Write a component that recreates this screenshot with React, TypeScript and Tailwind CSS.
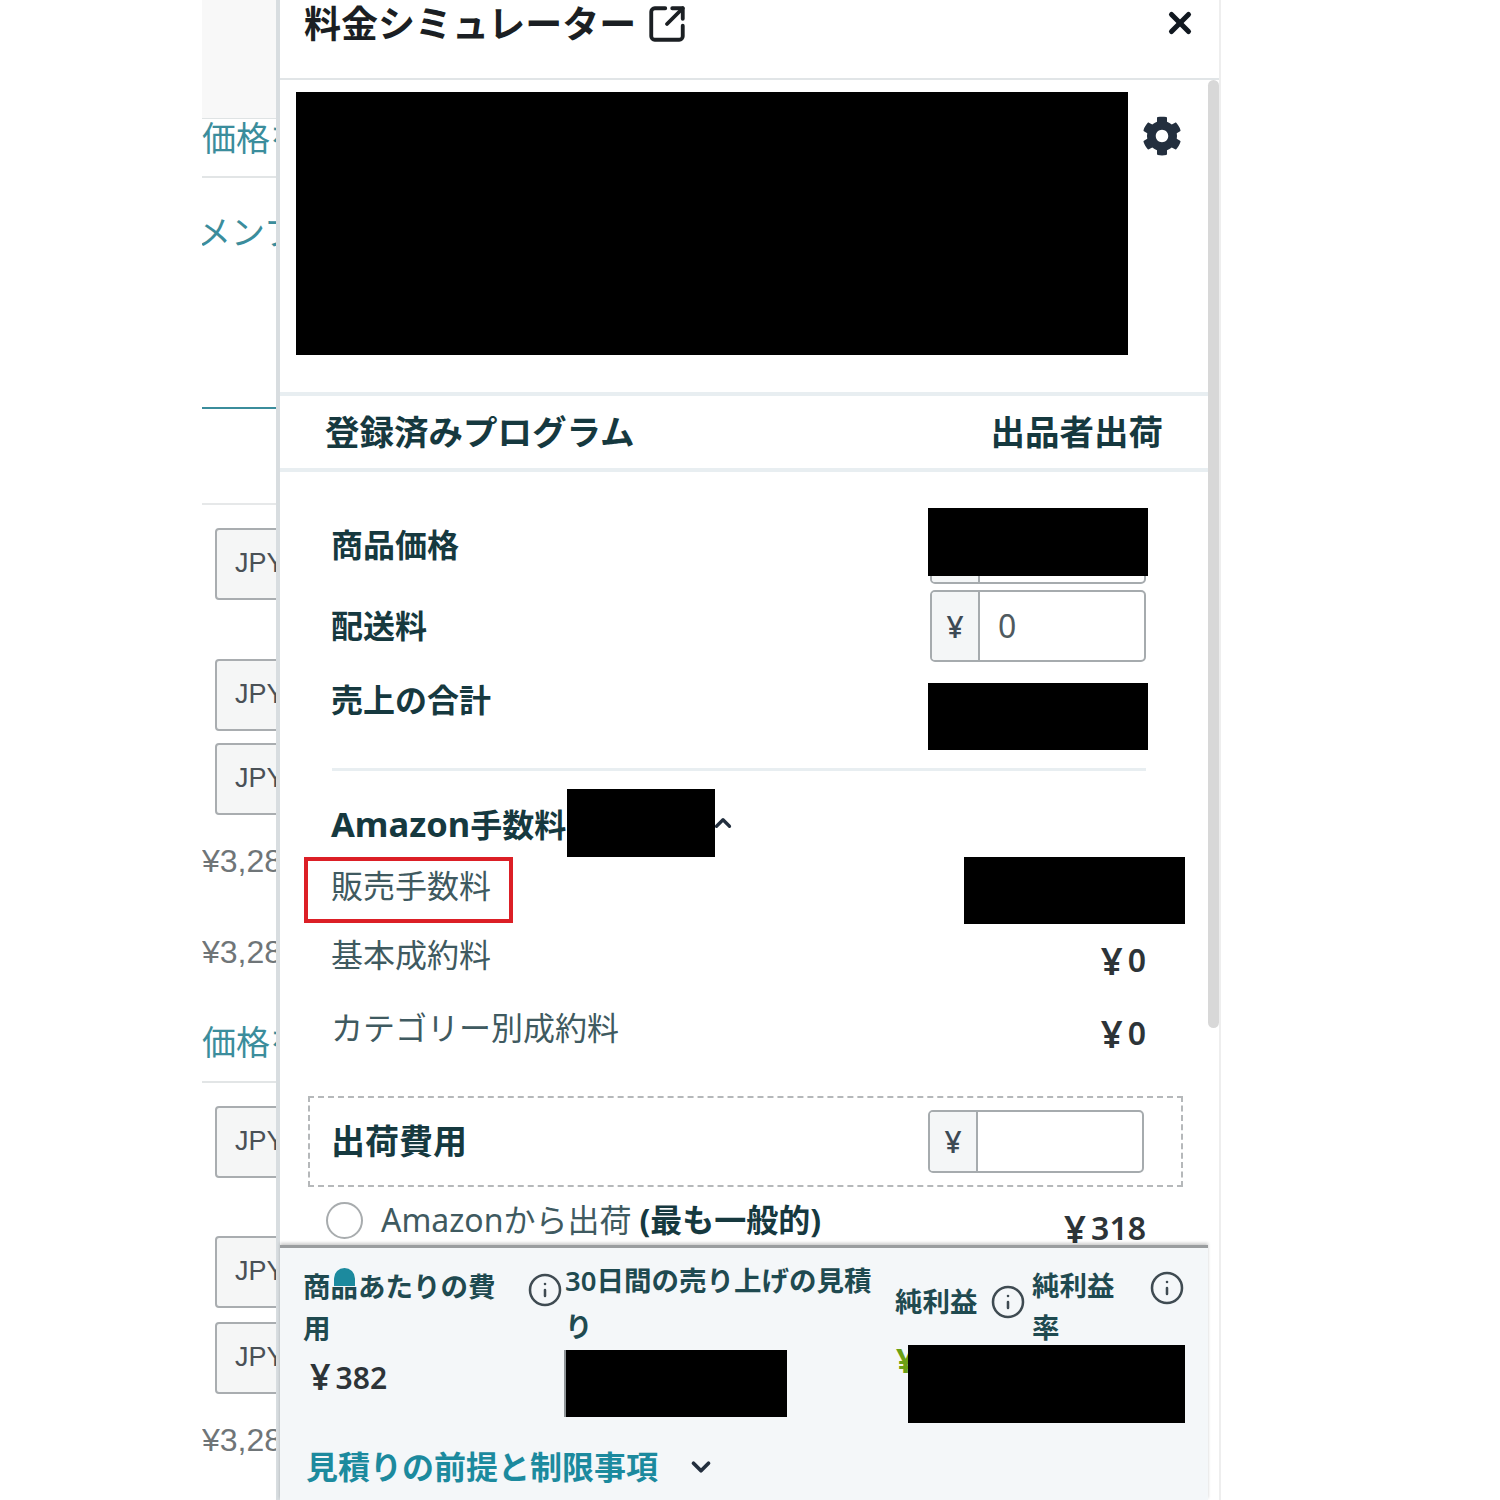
import React from "react";
import { FaCog } from "react-icons/fa";
import { ChevronDown, ChevronUp, Info, SquareArrowOutUpRight, X } from "lucide-react";

const FONT = "font-['Noto_Sans','Noto_Sans_CJK_JP',sans-serif]";

function JpyButton({ className = "" }: { className?: string }) {
  return (
    <div
      className={`ml-[13px] h-[72px] w-[90px] shrink-0 rounded-[4px] border-2 border-[#a9adb0] bg-[#f5f6f6] pl-[18px] font-['Liberation_Sans',sans-serif] text-[27px] leading-[66px] text-[#4a5156] ${className}`}
    >
      JPY
    </div>
  );
}

function PriceText({ className = "" }: { className?: string }) {
  return (
    <div className={`h-[36px] whitespace-nowrap font-['Liberation_Sans',sans-serif] text-[32px] leading-[36px] text-[#6f7578] ${className}`}>
      ¥3,280
    </div>
  );
}

function YenInput({ value, className = "" }: { value?: string; className?: string }) {
  return (
    <div className={`flex w-[216px] overflow-hidden rounded-[5px] border-2 border-[#a6abae] bg-white ${className}`}>
      <div className="flex w-[48px] items-center justify-center border-r-2 border-[#a6abae] bg-[#f4f6f7] text-[30px] font-medium text-[#3d4a55]">
        ¥
      </div>
      <div className="flex flex-1 items-center pl-[18px] text-[32px] font-normal text-[#4f5a60]">{value}</div>
    </div>
  );
}

function Amount({ yen, className = "" }: { yen: string; className?: string }) {
  return (
    <span className={`flex items-center whitespace-nowrap font-semibold text-[#2d3438] ${className}`}>
      <span className="mr-[5px] text-[1.2em] leading-none">¥</span>
      {yen}
    </span>
  );
}

function Sidebar() {
  return (
    <div className="flex h-[1500px] w-[74px] shrink-0 flex-col overflow-hidden">
      <div className="h-[119px] shrink-0 border-b border-[#dfe3e4] bg-[#f8f8f8]" />
      <div className={`h-[57px] shrink-0 whitespace-nowrap text-[34px] leading-[38px] text-[#3b8d9c] ${FONT}`}>価格を設定</div>
      <div className="h-[2px] shrink-0 bg-[#e2e5e6]" />
      <div className={`ml-[-5px] mt-[34px] h-[40px] shrink-0 whitespace-nowrap text-[34px] leading-[40px] text-[#3b8d9c] ${FONT}`}>メンブ</div>
      <div className="mt-[155px] h-[2px] shrink-0 bg-[#3b8d9c]" />
      <div className="mt-[94px] h-[2px] shrink-0 bg-[#e6e8e9]" />
      <JpyButton className="mt-[23px]" />
      <JpyButton className="mt-[59px]" />
      <JpyButton className="mt-[12px]" />
      <PriceText className="mt-[28px]" />
      <PriceText className="mt-[55px]" />
      <div className={`mt-[51px] h-[42px] shrink-0 whitespace-nowrap text-[34px] leading-[42px] text-[#3b8d9c] ${FONT}`}>価格を設定</div>
      <div className="mt-[18px] h-[2px] shrink-0 bg-[#e2e5e6]" />
      <JpyButton className="mt-[23px]" />
      <JpyButton className="mt-[58px]" />
      <JpyButton className="mt-[14px]" />
      <PriceText className="mt-[28px]" />
    </div>
  );
}

function Redacted({ className = "" }: { className?: string }) {
  return <div className={`absolute bg-black ${className}`} />;
}

function Footer() {
  return (
    <div className="relative h-[255px] shrink-0 border-t-[3px] border-[#9a9d9f] bg-[#f4f7f9] text-[#1f4a50] shadow-[0_-2px_3px_rgba(0,0,0,0.2)]">
      <div className="flex h-[194px]">
        <div className="ml-[23px] w-[260px] shrink-0 pt-[18px]">
          <div className="flex items-start justify-between">
            <div className="w-[200px] text-[27.5px] font-semibold leading-[42px]">商品あたりの費用</div>
            <Info size={36} strokeWidth={1.7} className="mt-[6px] text-[#3f4b52]" />
          </div>
          <div className="mt-[7px] pl-[7px]">
            <Amount yen="382" className="h-[40px] text-[30px]" />
          </div>
        </div>
        <div className="ml-[2px] w-[320px] shrink-0 pt-[10px]">
          <div className="text-[27.5px] font-semibold leading-[46px]">
            30日間の売り上げの見積
            <br />り
          </div>
        </div>
        <div className="ml-[10px] flex h-[66px] w-[137px] shrink-0 items-center gap-[12px] pt-[41px]">
          <span className="whitespace-nowrap text-[27.5px] font-semibold leading-[42px]">純利益</span>
          <Info size={36} strokeWidth={1.7} className="shrink-0 text-[#3f4b52]" />
        </div>
        <div className="flex w-[153px] shrink-0 items-start justify-between pt-[17px]">
          <div className="w-[90px] text-[27.5px] font-semibold leading-[42px]">純利益率</div>
          <Info size={36} strokeWidth={1.7} className="mt-[5px] text-[#3f4b52]" />
        </div>
      </div>
      <div className="ml-[26px] flex h-[50px] items-center gap-[28px] text-[32px] font-bold text-[#1c8a9e]">
        見積りの前提と制限事項
        <ChevronDown size={30} strokeWidth={3} className="text-[#232f3e]" />
      </div>

      {/* dot that sits on top of the first label */}
      <div className="absolute left-[54px] top-[20px] h-[18px] w-[21px] rounded-t-full bg-[#1c8a9e]" />
      <div className="absolute left-[284px] top-[102px] h-[67px] w-[2px] bg-[#8d9396]" />
      <Redacted className="left-[286px] top-[102px] h-[67px] w-[221px]" />
      <div className="absolute left-[616px] top-[92px] text-[34px] font-bold leading-[40px] text-[#6ca015]">¥</div>
      <Redacted className="left-[628px] top-[97px] h-[78px] w-[277px]" />
    </div>
  );
}

function Content() {
  return (
    <div className="min-h-0 flex-1 overflow-hidden">
      <div className="flex h-[316px] items-start border-b-4 border-[#e8eef1] pl-[16px] pt-[12px]">
        <div className="h-[263px] w-[832px] shrink-0 bg-black" />
        <FaCog size={40} className="ml-[14px] mt-[24px] text-[#232f3e]" />
      </div>
      <div className="flex h-[76px] items-center justify-between border-b-4 border-[#e8eef1] px-[45px] text-[34.5px] font-bold text-[#16393f]">
        <span>登録済みプログラム</span>
        <span>出品者出荷</span>
      </div>

      <div className="relative">
        <div className="flex h-[112px] items-start justify-between pl-[51px] pr-[62px] pt-[51px] text-[32px] font-bold leading-[44px] text-[#16393f]">
          <span>商品価格</span>
          <YenInput className="mt-[-11px] h-[72px] w-[216px]" />
        </div>
        <div className="mt-[6px] flex h-[72px] items-center justify-between pl-[51px] pr-[62px] text-[32px] font-bold text-[#16393f]">
          <span>配送料</span>
          <YenInput value="0" className="h-[72px] w-[216px]" />
        </div>
        <div className="pl-[51px] pt-[16px] text-[32px] font-bold leading-[44px] text-[#16393f]">売上の合計</div>

        <div className="ml-[52px] mr-[62px] mt-[46px] h-[3px] bg-[#e8eef1]" />

        <div className="mt-[31px] flex h-[44px] items-center pl-[51px] text-[32px] font-bold text-[#16393f]">
          <span className="whitespace-nowrap">
            <span className="text-[34.5px]">Amazon</span>手数料
          </span>
          <ChevronUp size={26} strokeWidth={3} className="ml-[144px] mt-[-2px] text-[#232f3e]" />
        </div>
        <div className="pl-[51px] pr-[62px] text-[32px] leading-[44px] text-[#3f5a60]">
          <div className="mt-[18px]">販売手数料</div>
          <div className="mt-[25px] flex h-[44px] items-start justify-between">
            <span>基本成約料</span>
            <Amount yen="0" className="mt-[5px] h-[44px] text-[32px]" />
          </div>
          <div className="mt-[29px] flex h-[44px] items-start justify-between">
            <span>カテゴリー別成約料</span>
            <Amount yen="0" className="mt-[5px] h-[44px] text-[32px]" />
          </div>
        </div>

        <div className="ml-[28px] mr-[25px] mt-[46px] flex h-[91px] items-center justify-between border-2 border-dashed border-[#b5b8ba] pl-[21px] pr-[37px]">
          <span className="text-[34px] font-bold text-[#16393f]">出荷費用</span>
          <YenInput className="h-[63px]" />
        </div>

        <div className="mt-[9px] flex h-[48px] items-center pl-[46px] pr-[62px] text-[32px] text-[#3f5a60]">
          <div className="h-[37px] w-[37px] shrink-0 rounded-full border-2 border-[#a8acae]" />
          <span className="ml-[18px] whitespace-nowrap">Amazonから出荷</span>
          <span className="ml-[8px] whitespace-nowrap font-bold text-[#16393f]">(最も一般的)</span>
          <Amount yen="318" className="ml-auto mt-[16px] text-[32px]" />
        </div>

        {/* redactions from the original screenshot */}
        <Redacted className="left-[648px] top-[36px] h-[68px] w-[220px]" />
        <Redacted className="left-[648px] top-[211px] h-[67px] w-[220px]" />
        <Redacted className="left-[287px] top-[317px] h-[68px] w-[148px]" />
        <Redacted className="left-[684px] top-[385px] h-[67px] w-[221px]" />
        <div className="absolute left-[24px] top-[385px] h-[66px] w-[209px] border-4 border-[#dc1f26]" />
      </div>
    </div>
  );
}

function Panel() {
  return (
    <div className={`flex h-[1500px] w-[945px] shrink-0 flex-col border-l-4 border-r-2 border-l-[#d8dde0] border-r-[#eeeeee] bg-white ${FONT}`}>
      <div className="flex h-[80px] shrink-0 items-start justify-between border-b-2 border-[#e1e5e7] pl-[24px] pr-[22px]">
        <div className="flex items-center pt-[2px] text-[37px] font-bold leading-[44px] text-[#1b1f23]">
          料金シミュレーター
          <SquareArrowOutUpRight size={42} strokeWidth={2.2} className="ml-[10px]" />
        </div>
        <X size={34} strokeWidth={3.6} className="mt-[6px] text-[#111820]" />
      </div>

      <div className="flex min-h-0 flex-1">
        <div className="flex w-[928px] min-w-0 flex-col">
          <Content />
          <Footer />
        </div>
        <div className="w-[11px] shrink-0">
          <div className="h-[948px] rounded-full bg-[#d8d8d8]" />
        </div>
      </div>
    </div>
  );
}

export default function App() {
  return (
    <div className={`flex h-[1500px] w-[1500px] overflow-hidden bg-white pl-[202px] ${FONT}`}>
      <Sidebar />
      <Panel />
    </div>
  );
}
